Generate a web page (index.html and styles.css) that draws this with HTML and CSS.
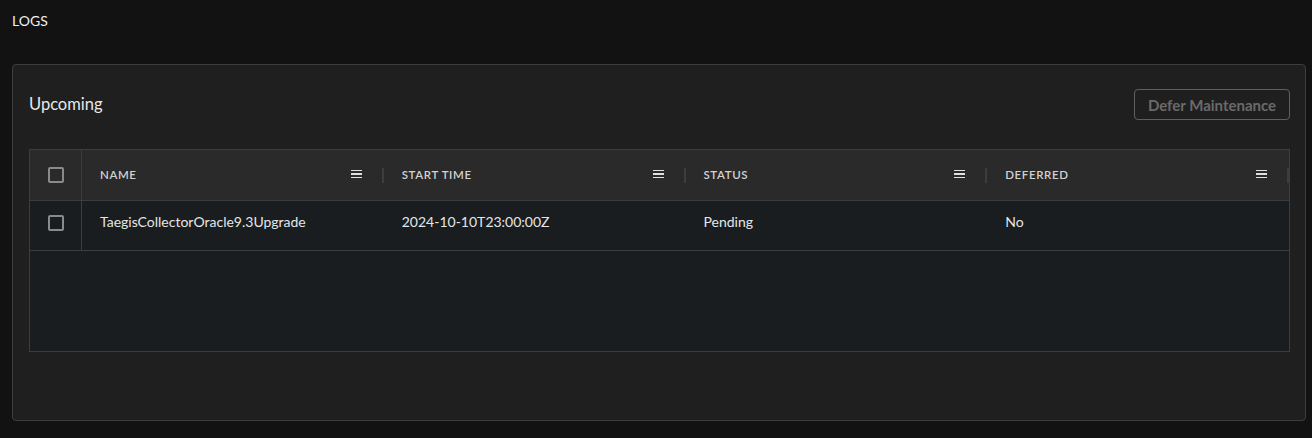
FILE: index.html
```html
<!DOCTYPE html>
<html>
<head>
<meta charset="utf-8">
<link rel="stylesheet" href="styles.css">
</head>
<body>
<div class="page">
  <div class="page-title">LOGS</div>
  <div class="card">
    <div class="card-head">
      <div class="card-title">Upcoming</div>
      <button class="btn" disabled>Defer Maintenance</button>
    </div>
    <div class="table">
      <div class="row head">
        <div class="cell check"><span class="box"></span></div>
        <div class="cell hcell"><span>NAME</span><span class="menu"><i></i><i></i><i></i></span><span class="sep"></span></div>
        <div class="cell hcell"><span>START TIME</span><span class="menu"><i></i><i></i><i></i></span><span class="sep"></span></div>
        <div class="cell hcell"><span>STATUS</span><span class="menu"><i></i><i></i><i></i></span><span class="sep"></span></div>
        <div class="cell hcell"><span>DEFERRED</span><span class="menu"><i></i><i></i><i></i></span><span class="sep"></span></div>
      </div>
      <div class="row body">
        <div class="cell check"><span class="box"></span></div>
        <div class="cell">TaegisCollectorOracle9.3Upgrade</div>
        <div class="cell">2024-10-10T23:00:00Z</div>
        <div class="cell">Pending</div>
        <div class="cell">No</div>
      </div>
      <div class="empty"></div>
    </div>
  </div>
</div>
</body>
</html>
```
FILE: styles.css
```css
* { box-sizing: border-box; }
html, body { margin: 0; padding: 0; background: #121212; }
body { font-family: Lato, "Noto Sans", sans-serif; color: #e6e6e6; }
.page { padding: 0 6px 0 12px; height: 438px; }
.page-title { font-size: 14px; line-height: 16px; padding-top: 13px; height: 64px; color: #f0f0f0; }
.card {
  background: #1f1f1f;
  border: 1px solid #3d3d3d;
  border-radius: 4px;
  height: 357px;
  padding: 24px 15px 0 16px;
}
.card-head { display: flex; justify-content: space-between; align-items: center; height: 31px; }
.card-title { font-size: 16.5px; color: #e8e8e8; padding-bottom: 2px; }
.btn {
  font-family: Lato, "Noto Sans", sans-serif;
  font-size: 15px;
  font-weight: 700;
  color: #6a6a6a;
  background: transparent;
  border: 1px solid #5f5f5f;
  border-radius: 4px;
  height: 31px;
  width: 156px;
  padding: 0;
}
.table { margin-top: 29px; border: 1px solid #3d3d3d; background: #191d20; }
.row { display: grid; grid-template-columns: 52px repeat(4, 1fr); }
.row.head { background: #2a2a2a; height: 51px; border-bottom: 1px solid #3d3d3d; }
.row.body { height: 50px; border-bottom: 1px solid #3d3d3d; }
.row.body .cell { padding-bottom: 8px; }
.cell { display: flex; align-items: center; padding-left: 18px; font-size: 14px; color: #e6e6e6; position: relative; }
.cell.check { justify-content: center; padding-left: 0; border-right: 1px solid #3d3d3d; }
.row.body .cell.check { padding-bottom: 5px; }
.hcell { font-size: 11.5px; letter-spacing: 0.6px; color: #d2d2d2; font-weight: 600; padding-right: 22px; padding-bottom: 2px; }
.box { width: 16px; height: 16px; border: 2px solid #8a8a8a; border-radius: 2px; }
.menu { margin-left: auto; display: flex; flex-direction: column; gap: 2.5px; width: 11px; }
.menu i { display: block; height: 1.3px; background: #e0e0e0; }
.sep { width: 2px; height: 15px; background: #3d3d3d; position: absolute; right: 0; top: 18px; }
.empty { height: 100px; }
```
